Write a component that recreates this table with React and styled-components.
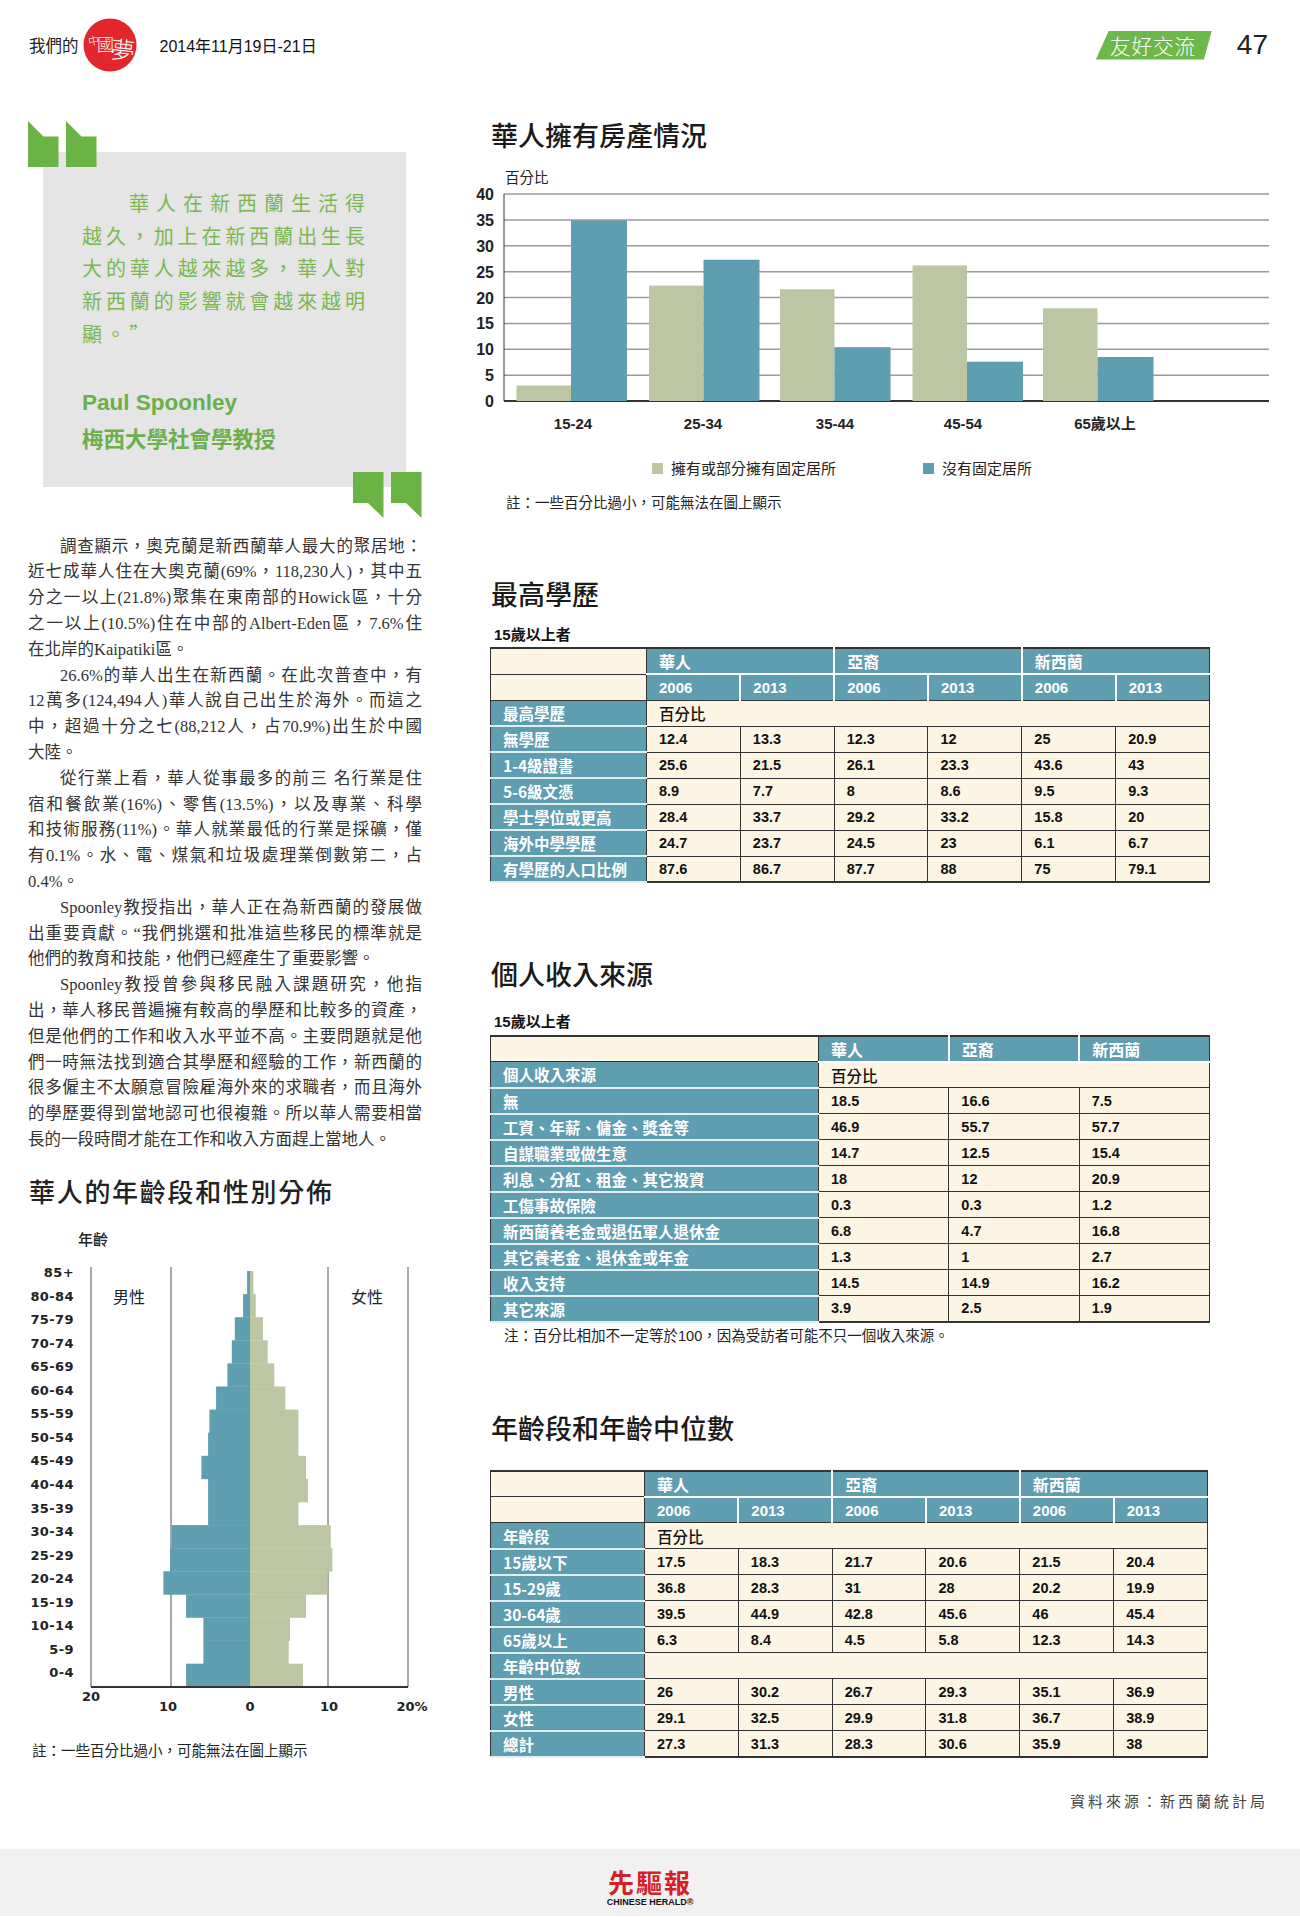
import React from "react";
import styled, { createGlobalStyle } from "styled-components";

const CJK = `"Noto Sans CJK TC", "Noto Sans CJK SC", sans-serif`;
const SANS = `"Liberation Sans", "Noto Sans CJK TC", sans-serif`;
const SERIF = `"Liberation Serif", "Noto Sans CJK TC", serif`;

const BLUE = "#5f9db0";
const BEIGE = "#bcc6a3";
const CREAM = "#fdf5e3";
const GREEN = "#6ab344";

const GlobalStyle = createGlobalStyle`
  html, body { margin: 0; padding: 0; background: #fff; }
  body { font-family: ${CJK}; color: #222; }
`;

const Page = styled.div`
  width: 1300px;
  min-height: 1917px;
  display: flex;
  flex-direction: column;
`;

/* ---------- header ---------- */

const Header = styled.header`
  height: 90px;
  display: flex;
  align-items: center;
  padding: 0 32px 0 29px;
`;

const Mine = styled.span`
  font: 16.5px ${CJK};
  color: #222;
`;

const LogoSvg = styled.svg`
  margin-left: 4px;
  display: block;
  text { font-family: ${CJK}; fill: #fff; }
`;

const DateText = styled.span`
  margin-left: 23px;
  font: 16px ${SANS};
  color: #111;
`;

const Spacer = styled.div`
  flex: 1;
`;

const Tag = styled.div`
  width: 116px;
  height: 29px;
  box-sizing: border-box;
  padding-left: 14px;
  background: #6cb84a;
  clip-path: polygon(13px 0, 100% 0, calc(100% - 8px) 100%, 0 100%);
  color: #fff;
  font: 300 21px/29px ${CJK};
  letter-spacing: 0.5px;
`;

const PageNo = styled.span`
  margin-left: 25px;
  font: 28px "Liberation Sans Narrow", "Liberation Sans", sans-serif;
  color: #222;
`;

/* ---------- columns ---------- */

const Main = styled.main`
  display: flex;
  padding-left: 28px;
  gap: 68px;
`;

const LeftCol = styled.div`
  width: 394px;
  display: flex;
  flex-direction: column;
`;

const RightCol = styled.div`
  width: 780px;
  display: flex;
  flex-direction: column;
`;

/* ---------- quote ---------- */

const QuoteBlock = styled.div`
  position: relative;
  height: 398px;
  margin-top: 31px;
`;

const QuoteBox = styled.div`
  margin: 31px 0 0 15px;
  width: 363px;
  height: 335px;
  box-sizing: border-box;
  background: #e5e5e5;
  padding: 35px 41px 0 39px;
`;

const QuoteLine = styled.div`
  font: 20px/32.7px ${CJK};
  color: #7ab84f;
  white-space: nowrap;
  text-align: ${(p) => (p.$last ? "left" : "justify")};
  text-align-last: ${(p) => (p.$last ? "left" : "justify")};
  text-indent: ${(p) => (p.$indent ? "47px" : "0")};
  letter-spacing: ${(p) => (p.$last ? "3.6px" : "0")};
`;

const QuoteName = styled.div`
  margin-top: 37px;
  font: bold 22.5px/30px "Liberation Sans", sans-serif;
  color: #6ab04b;
`;

const QuoteRole = styled.div`
  margin-top: 5px;
  font: bold 21.5px/30px ${CJK};
  color: #6ab04b;
`;

const MarkOpen = styled.svg`
  position: absolute;
  left: 0;
  top: 0;
`;

const MarkClose = styled.svg`
  position: absolute;
  right: 0;
  bottom: 1px;
`;

/* ---------- body text ---------- */

const Body = styled.div`
  margin-top: 14.6px;
  font: 16.5px/25.8px ${SERIF};
  color: #333;
`;

const BodyLine = styled.div`
  white-space: nowrap;
  text-align: justify;
  text-align-last: ${(p) => (p.$last ? "left" : "justify")};
  text-indent: ${(p) => (p.$indent ? "32px" : "0")};
`;

/* ---------- headings ---------- */

const Title = styled.h2`
  margin: ${(p) => p.$mt}px 0 0 1px;
  font: 500 27px/32px ${CJK};
  color: #1a1a1a;
`;

const PyramidTitle = styled.h2`
  margin: 22px 0 0 1px;
  font: 500 26px/32px ${CJK};
  letter-spacing: 1.7px;
  color: #222;
`;

const Sub = styled.div`
  margin: ${(p) => p.$mt}px 0 0 4px;
  font: bold 15px/20px ${SANS};
  color: #111;
`;

const Note = styled.div`
  margin: ${(p) => p.$mt}px 0 0 ${(p) => p.$ml}px;
  font: 14.5px/${(p) => p.$lh || 20}px ${SANS};
  color: #222;
`;

/* ---------- charts ---------- */

const AgeAxisLabel = styled.div`
  margin: 22px 0 0 50px;
  font: 500 15px/20px ${CJK};
  color: #222;
`;

const PyramidSvg = styled.svg`
  display: block;
  margin-left: -28px;
  text { font-family: "DejaVu Sans", sans-serif; font-weight: bold; font-size: 13px; fill: #222; }
  text.cjk { font-family: ${CJK}; font-weight: 400; font-size: 16px; }
`;

const BarSvg = styled.svg`
  display: block;
  margin-left: -20px;
  text { font-family: ${SANS}; font-weight: bold; font-size: 16px; fill: #222; }
  text.axis { font-size: 14.5px; font-weight: 400; }
  text.x { font-size: 15px; }
`;

const Legend = styled.div`
  margin: 17px 0 0 162px;
  display: flex;
  gap: 87px;
  font: 15px/20px ${CJK};
  color: #222;
`;

const LegendItem = styled.div`
  display: flex;
  align-items: center;
  gap: 8px;
`;

const Swatch = styled.span`
  width: 11px;
  height: 11px;
  background: ${(p) => p.$color};
`;

/* ---------- tables ---------- */

const DataTable = styled.table`
  margin-top: ${(p) => p.$mt}px;
  width: ${(p) => p.$w}px;
  border-collapse: collapse;
  table-layout: fixed;
  border-top: 2px solid #333;
  border-bottom: 2px solid #333;
  border-left: 1px solid #333;
  border-right: 1px solid #333;
  font-family: ${SANS};
`;

const Col = styled.col`
  width: ${(p) => p.$w}px;
`;

const Row = styled.tr`
  height: 26px;
`;

const Corner = styled.td`
  background: ${CREAM};
  border: 1px solid #333;
  padding: 0;
`;

const GroupHead = styled.th`
  background: ${BLUE};
  color: #fff;
  text-align: left;
  padding: 0 0 0 12px;
  font: bold 16px ${CJK};
  border-left: ${(p) => (p.$first ? "1px solid #333" : "2px solid #fff")};
  border-bottom: 2px solid #fff;
`;

const YearHead = styled.th`
  background: ${BLUE};
  color: #fff;
  text-align: left;
  padding: 0 0 0 12px;
  font: bold 15px ${SANS};
  border-left: ${(p) => (p.$first ? "1px solid #333" : "2px solid #fff")};
  border-bottom: 1px solid #333;
`;

const Label = styled.td`
  background: ${BLUE};
  color: #fff;
  font: bold 15.5px ${CJK};
  padding: 0 0 0 12px;
  white-space: nowrap;
  border-bottom: 2px solid #e3eef1;
  border-right: 1px solid #333;
`;

const Cell = styled.td`
  background: ${CREAM};
  border: 1px solid #333;
  padding: 0 0 0 12px;
  font: bold 14.5px ${SANS};
  color: #111;
`;

const Unit = styled.td`
  background: ${CREAM};
  border: 1px solid #333;
  padding: 0 0 0 12px;
  font: 500 15.5px ${CJK};
  color: #111;
`;

/* ---------- foot ---------- */

const Source = styled.div`
  margin-top: 30px;
  padding-right: 32px;
  display: flex;
  justify-content: flex-end;
  font: 15px/20px ${CJK};
  letter-spacing: 3px;
  color: #444;
`;

const Footer = styled.footer`
  margin-top: 38px;
  height: 67px;
  background: #f1f1f1;
  display: flex;
  flex-direction: column;
  align-items: center;
  padding-top: 19px;
  box-sizing: border-box;
`;

const HeraldCn = styled.div`
  font: bold 26px/28px ${CJK};
  letter-spacing: 2px;
  color: #d42027;
`;

const HeraldEn = styled.div`
  margin-top: 1px;
  font: bold 9px/10px "Liberation Sans Narrow", "Liberation Sans", sans-serif;
  color: #111;
`;

/* ---------- data ---------- */

const quoteLines = [
  "華人在新西蘭生活得",
  "越久，加上在新西蘭出生長",
  "大的華人越來越多，華人對",
  "新西蘭的影響就會越來越明",
  "顯。”",
];

const paragraphs = [
  [
    "調查顯示，奧克蘭是新西蘭華人最大的聚居地：",
    "近七成華人住在大奧克蘭(69%，118,230人)，其中五",
    "分之一以上(21.8%)聚集在東南部的Howick區，十分",
    "之一以上(10.5%)住在中部的Albert-Eden區，7.6%住",
    "在北岸的Kaipatiki區。",
  ],
  [
    "26.6%的華人出生在新西蘭。在此次普查中，有",
    "12萬多(124,494人)華人說自己出生於海外。而這之",
    "中，超過十分之七(88,212人，占70.9%)出生於中國",
    "大陸。",
  ],
  [
    "從行業上看，華人從事最多的前三 名行業是住",
    "宿和餐飲業(16%)、零售(13.5%)，以及專業、科學",
    "和技術服務(11%)。華人就業最低的行業是採礦，僅",
    "有0.1%。水、電、煤氣和垃圾處理業倒數第二，占",
    "0.4%。",
  ],
  [
    "Spoonley教授指出，華人正在為新西蘭的發展做",
    "出重要貢獻。“我們挑選和批准這些移民的標準就是",
    "他們的教育和技能，他們已經產生了重要影響。",
  ],
  [
    "Spoonley教授曾參與移民融入課題研究，他指",
    "出，華人移民普遍擁有較高的學歷和比較多的資產，",
    "但是他們的工作和收入水平並不高。主要問題就是他",
    "們一時無法找到適合其學歷和經驗的工作，新西蘭的",
    "很多僱主不太願意冒險雇海外來的求職者，而且海外",
    "的學歷要得到當地認可也很複雜。所以華人需要相當",
    "長的一段時間才能在工作和收入方面趕上當地人。",
  ],
];

const ageGroups = [
  "85+", "80-84", "75-79", "70-74", "65-69", "60-64", "55-59", "50-54", "45-49",
  "40-44", "35-39", "30-34", "25-29", "20-24", "15-19", "10-14", "5-9", "0-4",
];
const male = [2.9, 6.9, 15.2, 18.2, 22.6, 33.9, 40.6, 41.9, 48.6, 41.9, 41.9, 78.2, 79.9, 86.6, 63.9, 46.6, 46.6, 63.9];
const female = [3.4, 5.7, 13, 17.7, 24.3, 35.3, 48.4, 48.4, 56, 58, 48.4, 80.8, 82.4, 77.7, 56, 40, 38.7, 53];

const housing = [
  { label: "15-24", own: 3.0, rent: 34.9, x: 46.5, lx: 103 },
  { label: "25-34", own: 22.3, rent: 27.3, x: 179, lx: 233 },
  { label: "35-44", own: 21.6, rent: 10.4, x: 310, lx: 365 },
  { label: "45-54", own: 26.2, rent: 7.6, x: 442.5, lx: 493 },
  { label: "65歲以上", own: 17.9, rent: 8.5, x: 573, lx: 635 },
];

const groups = ["華人", "亞裔", "新西蘭"];
const years = ["2006", "2013"];

const eduRows = [
  ["無學歷", "12.4", "13.3", "12.3", "12", "25", "20.9"],
  ["1-4級證書", "25.6", "21.5", "26.1", "23.3", "43.6", "43"],
  ["5-6級文憑", "8.9", "7.7", "8", "8.6", "9.5", "9.3"],
  ["學士學位或更高", "28.4", "33.7", "29.2", "33.2", "15.8", "20"],
  ["海外中學學歷", "24.7", "23.7", "24.5", "23", "6.1", "6.7"],
  ["有學歷的人口比例", "87.6", "86.7", "87.7", "88", "75", "79.1"],
];

const incomeRows = [
  ["無", "18.5", "16.6", "7.5"],
  ["工資、年薪、傭金、獎金等", "46.9", "55.7", "57.7"],
  ["自謀職業或做生意", "14.7", "12.5", "15.4"],
  ["利息、分紅、租金、其它投資", "18", "12", "20.9"],
  ["工傷事故保險", "0.3", "0.3", "1.2"],
  ["新西蘭養老金或退伍軍人退休金", "6.8", "4.7", "16.8"],
  ["其它養老金、退休金或年金", "1.3", "1", "2.7"],
  ["收入支持", "14.5", "14.9", "16.2"],
  ["其它來源", "3.9", "2.5", "1.9"],
];

const ageBandRows = [
  ["15歲以下", "17.5", "18.3", "21.7", "20.6", "21.5", "20.4"],
  ["15-29歲", "36.8", "28.3", "31", "28", "20.2", "19.9"],
  ["30-64歲", "39.5", "44.9", "42.8", "45.6", "46", "45.4"],
  ["65歲以上", "6.3", "8.4", "4.5", "5.8", "12.3", "14.3"],
];

const medianRows = [
  ["男性", "26", "30.2", "26.7", "29.3", "35.1", "36.9"],
  ["女性", "29.1", "32.5", "29.9", "31.8", "36.7", "38.9"],
  ["總計", "27.3", "31.3", "28.3", "30.6", "35.9", "38"],
];

/* ---------- pieces ---------- */

const Logo = () => (
  <LogoSvg width="54" height="54" viewBox="0 0 54 54">
    <circle cx="27" cy="27" r="26.5" fill="#e3262b" />
    <text x="5" y="27" fontSize="11" fontWeight="300" transform="rotate(-10 10 22)">中</text>
    <text x="14" y="33" fontSize="17" fontWeight="300">國</text>
    <text x="28" y="41" fontSize="24" fontWeight="300" transform="rotate(6 40 30)">夢</text>
  </LogoSvg>
);

const QuoteMarks = ({ close }) => {
  const shape = close
    ? "M0 0 H30.5 V46 L15 31 H0 Z"
    : "M0 0 L15.5 15.5 H30.5 V46 H0 Z";
  const Mark = close ? MarkClose : MarkOpen;
  return (
    <Mark width="69" height="46" viewBox="0 0 69 46">
      <path d={shape} fill={GREEN} />
      <path d={shape} fill={GREEN} transform="translate(38 0)" />
    </Mark>
  );
};

const Pyramid = () => {
  const top = 22;
  const rowH = 23.1;
  const cx = 250;
  return (
    <PyramidSvg width="440" height="470" viewBox="0 0 440 470">
      {[91, 171, 328, 408].map((x) => (
        <line key={x} x1={x} x2={x} y1="18" y2="438" stroke="#8a8a8a" strokeWidth="1.5" />
      ))}
      {ageGroups.map((g, i) => (
        <g key={g}>
          <rect x={cx - male[i]} y={top + i * rowH} width={male[i]} height={rowH + 0.3} fill={BLUE} />
          <rect x={cx} y={top + i * rowH} width={female[i]} height={rowH + 0.3} fill={BEIGE} />
          <text x="74" y={23 + i * 23.55 + 5} textAnchor="end" letterSpacing="0.4">{g}</text>
        </g>
      ))}
      <line x1="91" x2="408" y1="438" y2="438" stroke="#333" strokeWidth="2" />
      <text className="cjk" x="113" y="54">男性</text>
      <text className="cjk" x="351" y="54">女性</text>
      <text x="91" y="452" textAnchor="middle">20</text>
      <text x="168" y="462" textAnchor="middle">10</text>
      <text x="250" y="462" textAnchor="middle">0</text>
      <text x="329" y="462" textAnchor="middle">10</text>
      <text x="412" y="462" textAnchor="middle">20%</text>
    </PyramidSvg>
  );
};

const HousingChart = () => {
  const base = 250;
  const step = 25.875;
  const unit = step / 5;
  return (
    <BarSvg width="800" height="290" viewBox="0 0 800 290">
      <text className="axis" x="35" y="32">百分比</text>
      {Array.from({ length: 9 }, (_, k) => {
        const y = base - k * step;
        return (
          <g key={k}>
            <line
              x1="34"
              x2="799"
              y1={y}
              y2={y}
              stroke={k === 0 ? "#333" : "#9a9a9a"}
              strokeWidth={k === 0 ? 2 : 1.5}
            />
            <text x="24" y={y + 6} textAnchor="end">{k * 5}</text>
          </g>
        );
      })}
      <line x1="34" x2="34" y1={base - 8 * step} y2={base} stroke="#333" strokeWidth="1" />
      {housing.map((h) => (
        <g key={h.label}>
          <rect x={h.x} y={base - h.own * unit} width="54.5" height={h.own * unit} fill={BEIGE} />
          <rect x={h.x + 54.5} y={base - h.rent * unit} width="56" height={h.rent * unit} fill={BLUE} />
          <text className="x" x={h.lx} y="278" textAnchor="middle">{h.label}</text>
        </g>
      ))}
    </BarSvg>
  );
};

const YearTableHead = () => (
  <>
    <Row>
      <Corner />
      {groups.map((g, i) => (
        <GroupHead key={g} colSpan={2} $first={i === 0}>{g}</GroupHead>
      ))}
    </Row>
    <Row>
      <Corner />
      {groups.flatMap((g, gi) =>
        years.map((y, yi) => (
          <YearHead key={g + y} $first={gi === 0 && yi === 0}>{y}</YearHead>
        ))
      )}
    </Row>
  </>
);

const ValueRow = ({ row }) => (
  <Row>
    <Label>{row[0]}</Label>
    {row.slice(1).map((v, i) => (
      <Cell key={i}>{v}</Cell>
    ))}
  </Row>
);

const SixCols = ({ label }) => (
  <colgroup>
    <Col $w={label} />
    {Array.from({ length: 6 }, (_, i) => (
      <Col key={i} />
    ))}
  </colgroup>
);

export default function App() {
  return (
    <Page>
      <GlobalStyle />
      <Header>
        <Mine>我們的</Mine>
        <Logo />
        <DateText>2014年11月19日-21日</DateText>
        <Spacer />
        <Tag>友好交流</Tag>
        <PageNo>47</PageNo>
      </Header>

      <Main>
        <LeftCol>
          <QuoteBlock>
            <QuoteMarks />
            <QuoteBox>
              {quoteLines.map((l, i) => (
                <QuoteLine key={i} $indent={i === 0} $last={i === quoteLines.length - 1}>
                  {l}
                </QuoteLine>
              ))}
              <QuoteName>Paul Spoonley</QuoteName>
              <QuoteRole>梅西大學社會學教授</QuoteRole>
            </QuoteBox>
            <QuoteMarks close />
          </QuoteBlock>

          <Body>
            {paragraphs.map((p, pi) =>
              p.map((l, li) => (
                <BodyLine key={pi + "-" + li} $indent={li === 0} $last={li === p.length - 1}>
                  {l}
                </BodyLine>
              ))
            )}
          </Body>

          <PyramidTitle>華人的年齡段和性別分佈</PyramidTitle>
          <AgeAxisLabel>年齡</AgeAxisLabel>
          <Pyramid />
          <Note $mt={22} $ml={4}>註：一些百分比過小，可能無法在圖上顯示</Note>
        </LeftCol>

        <RightCol>
          <Title $mt={29}>華人擁有房產情況</Title>
          <HousingChart />
          <Legend>
            <LegendItem>
              <Swatch $color={BEIGE} />
              擁有或部分擁有固定居所
            </LegendItem>
            <LegendItem>
              <Swatch $color={BLUE} />
              沒有固定居所
            </LegendItem>
          </Legend>
          <Note $mt={15} $ml={16}>註：一些百分比過小，可能無法在圖上顯示</Note>

          <Title $mt={65}>最高學歷</Title>
          <Sub $mt={15}>15歲以上者</Sub>
          <DataTable $mt={2} $w={720}>
            <SixCols label={156} />
            <tbody>
              <YearTableHead />
              <Row>
                <Label>最高學歷</Label>
                <Unit colSpan={6}>百分比</Unit>
              </Row>
              {eduRows.map((r) => (
                <ValueRow key={r[0]} row={r} />
              ))}
            </tbody>
          </DataTable>

          <Title $mt={75}>個人收入來源</Title>
          <Sub $mt={21.7}>15歲以上者</Sub>
          <DataTable $mt={3} $w={720}>
            <colgroup>
              <Col $w={328} />
              <Col />
              <Col />
              <Col />
            </colgroup>
            <tbody>
              <Row>
                <Corner />
                {groups.map((g, i) => (
                  <GroupHead key={g} $first={i === 0}>{g}</GroupHead>
                ))}
              </Row>
              <Row>
                <Label>個人收入來源</Label>
                <Unit colSpan={3}>百分比</Unit>
              </Row>
              {incomeRows.map((r) => (
                <ValueRow key={r[0]} row={r} />
              ))}
            </tbody>
          </DataTable>
          <Note $mt={4.3} $ml={14} $lh={18}>
            注：百分比相加不一定等於100，因為受訪者可能不只一個收入來源。
          </Note>

          <Title $mt={67}>年齡段和年齡中位數</Title>
          <DataTable $mt={26} $w={718}>
            <SixCols label={154} />
            <tbody>
              <YearTableHead />
              <Row>
                <Label>年齡段</Label>
                <Unit colSpan={6}>百分比</Unit>
              </Row>
              {ageBandRows.map((r) => (
                <ValueRow key={r[0]} row={r} />
              ))}
              <Row>
                <Label>年齡中位數</Label>
                <Unit colSpan={6} />
              </Row>
              {medianRows.map((r) => (
                <ValueRow key={r[0]} row={r} />
              ))}
            </tbody>
          </DataTable>
        </RightCol>
      </Main>

      <Source>資料來源：新西蘭統計局</Source>
      <Footer>
        <HeraldCn>先驅報</HeraldCn>
        <HeraldEn>CHINESE HERALD®</HeraldEn>
      </Footer>
    </Page>
  );
}
